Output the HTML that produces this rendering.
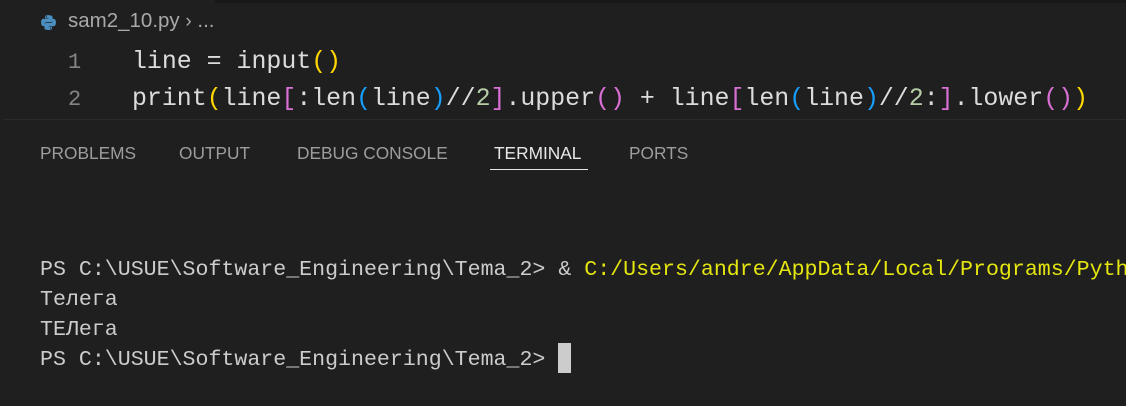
<!DOCTYPE html>
<html><head><meta charset="utf-8"><style>
body{margin:0;width:1126px;height:406px;background:#1f1f1f;overflow:hidden;position:relative;font-family:"Liberation Sans",sans-serif}
.a{position:absolute;white-space:pre}
.code{font-family:"Liberation Mono",monospace;font-size:24.9px;color:#dcdcdc;line-height:30px}
.ln{color:#858585;font-family:"Liberation Mono",monospace;font-size:22px;line-height:30px}
.term{font-family:"Liberation Mono","DejaVu Sans Mono",monospace;font-size:21.6px;color:#cccccc;line-height:30px}
.y{color:#ffd700}.p{color:#da70d6}.b{color:#179fff}.n{color:#b5cea8}
.tab{font-size:17.3px;color:#9d9d9d;top:143px}
</style></head><body>
<div class="a" style="left:215px;top:0;width:911px;height:3px;background:#181818"></div>
<svg class="a" style="left:40px;top:14px" width="17" height="17" viewBox="0 0 16 16"><path d="M7.8 1C4.5 1 4.7 2.4 4.7 2.4V4h3.2v.5H3.4S1 4.2 1 7.9s2.1 3.5 2.1 3.5h1.2V9.7s-.1-2.1 2.1-2.1h3.4s2 0 2-2V2.9S12.1 1 7.8 1zM6 2.1a.6.6 0 110 1.2.6.6 0 010-1.2z" fill="#4a8fc0"/><path d="M8.2 15c3.3 0 3.1-1.4 3.1-1.4V12H8.1v-.5h4.5S15 11.8 15 8.1s-2.1-3.5-2.1-3.5h-1.2v1.7s.1 2.1-2.1 2.1H6.2s-2 0-2 2v3.3S3.9 15 8.2 15zm1.8-1.1a.6.6 0 110-1.2.6.6 0 010 1.2z" fill="#4a8fc0"/></svg>
<div class="a" style="left:68px;top:9px;font-size:20.5px;color:#a9a9a9">sam2_10.py <span style="font-size:19px">&#x203A;</span> ...</div>
<div class="a ln" style="left:68px;top:48px">1</div>
<div class="a ln" style="left:68px;top:85px">2</div>
<div class="a code" style="left:132px;top:47px">line = input<span class="y">()</span></div>
<div class="a code" style="left:132px;top:84px">print<span class="y">(</span>line<span class="p">[</span>:len<span class="b">(</span>line<span class="b">)</span>//<span class="n">2</span><span class="p">]</span>.upper<span class="p">()</span> + line<span class="p">[</span>len<span class="b">(</span>line<span class="b">)</span>//<span class="n">2</span>:<span class="p">]</span>.lower<span class="p">()</span><span class="y">)</span></div>
<div class="a" style="left:3px;top:119px;width:1123px;height:1px;background:#2b2b2b"></div>
<div class="a tab" style="left:40px">PROBLEMS</div>
<div class="a tab" style="left:179px">OUTPUT</div>
<div class="a tab" style="left:297px">DEBUG CONSOLE</div>
<div class="a tab" style="left:494px;color:#e7e7e7">TERMINAL</div>
<div class="a tab" style="left:629px">PORTS</div>
<div class="a" style="left:490px;top:169px;width:98px;height:1px;background:#e7e7e7"></div>
<div class="a term" style="left:40px;top:255px">PS C:\USUE\Software_Engineering\Tema_2&gt; &amp; <span style="color:#e5e510">C:/Users/andre/AppData/Local/Programs/Python</span></div>
<div class="a term" style="left:40px;top:285px">Телега</div>
<div class="a term" style="left:40px;top:315px">ТЕЛега</div>
<div class="a term" style="left:40px;top:345px">PS C:\USUE\Software_Engineering\Tema_2&gt;</div>
<div class="a" style="left:558px;top:343px;width:13px;height:30px;background:#cccccc"></div>
</body></html>
